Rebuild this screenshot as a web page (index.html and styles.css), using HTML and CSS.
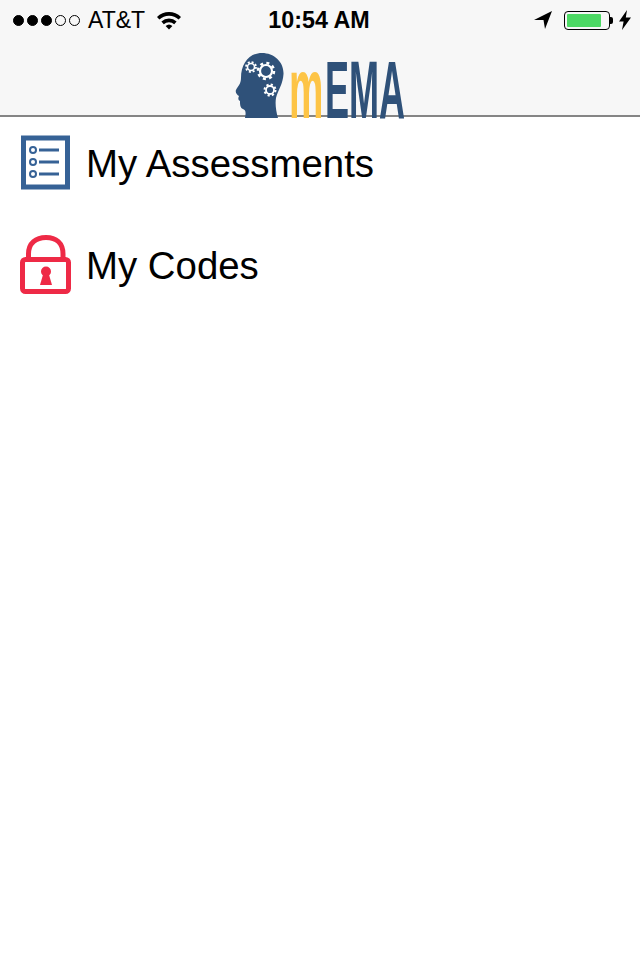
FILE: index.html
```html
<!DOCTYPE html>
<html lang="en">
<head>
    <meta charset="UTF-8">
    <meta name="viewport" content="width=device-width, initial-scale=1.0">
    <title>mEMA</title>
    <link rel="stylesheet" href="styles.css">
</head>
<body>
    <div class="top-bar">
        <div class="status-bar">
            <div class="status-left">
                <div class="signal">
                    <span class="dot on"></span>
                    <span class="dot on"></span>
                    <span class="dot on"></span>
                    <span class="dot"></span>
                    <span class="dot"></span>
                </div>
                <span class="carrier">AT&amp;T</span>
                <svg class="wifi" width="26" height="20" viewBox="0 0 26 20">
                    <path d="M1 7 A17 17 0 0 1 25 7 L22.6 9.6 A13.6 13.6 0 0 0 3.4 9.6 Z" fill="#000"/>
                    <path d="M5.4 11.6 A11 11 0 0 1 20.6 11.6 L18.2 14.2 A7.6 7.6 0 0 0 7.8 14.2 Z" fill="#000"/>
                    <path d="M9.6 16 A5 5 0 0 1 16.4 16 L13 19.6 Z" fill="#000"/>
                </svg>
            </div>
            <div class="clock">10:54 AM</div>
            <div class="status-right">
                <svg class="arrow" width="20" height="20" viewBox="0 0 20 20">
                    <path d="M1 10 L19 1 L12 19 L10.5 10 Z" fill="#000"/>
                </svg>
                <div class="battery">
                    <div class="battery-body">
                        <div class="battery-level"></div>
                    </div>
                    <div class="battery-nub"></div>
                </div>
                <svg class="bolt" width="12" height="20" viewBox="0 0 12 20">
                    <path d="M8 0 L0 11.5 L4.6 11.5 L3 20 L12 7.5 L6.8 7.5 Z" fill="#000"/>
                </svg>
            </div>
        </div>
        <div class="nav-bar">
            <svg class="logo" width="176" height="100" viewBox="232 40 176 100">
                <path d="M262 53 C274 53 284 62 283.500 74 C283 84 278 90 276 98 C275 104 276 111 278 118 L245 118 C246 113 246 110 243 109 C240 108 240 104 240 101 C238 100 238 98 239 96 C237 95 235 92 236 90 C238 86 241 84 241 78 C241 64 249 53 262 53 Z" fill="#2f5179"/>
                <circle cx="266" cy="71" r="6" fill="none" stroke="#fff" stroke-width="2.200"/>
                <circle cx="266" cy="71" r="8" fill="none" stroke="#fff" stroke-width="2.500" stroke-dasharray="3 3.300"/>
                <circle cx="251" cy="67" r="3.500" fill="none" stroke="#fff" stroke-width="1.600"/>
                <circle cx="251" cy="67" r="5" fill="none" stroke="#fff" stroke-width="1.800" stroke-dasharray="2 1.930"/>
                <circle cx="270" cy="90" r="4" fill="none" stroke="#fff" stroke-width="1.800"/>
                <circle cx="270" cy="90" r="5.500" fill="none" stroke="#fff" stroke-width="2" stroke-dasharray="2.200 2.120"/>
                <text class="logo-m" transform="translate(289 118) scale(0.45 1)">m</text>
                <text class="logo-ema" transform="translate(325 118) scale(0.445 1)">EMA</text>
            </svg>
        </div>
    </div>

    <div class="menu">
        <div class="menu-row">
            <svg class="menu-icon" width="52" height="64" viewBox="0 0 52 64">
                <rect x="3.500" y="6" width="44" height="49" fill="none" stroke="#366296" stroke-width="5"/>
                <circle cx="13" cy="18" r="3" fill="none" stroke="#366296" stroke-width="2"/>
                <circle cx="13" cy="30" r="3" fill="none" stroke="#366296" stroke-width="2"/>
                <circle cx="13" cy="42" r="3" fill="none" stroke="#366296" stroke-width="2"/>
                <path d="M19 18 H39 M19 30 H39 M19 42 H39" stroke="#366296" stroke-width="3"/>
            </svg>
            <span class="menu-label">My Assessments</span>
        </div>
        <div class="menu-row">
            <svg class="menu-icon" width="52" height="64" viewBox="0 0 52 64">
                <path d="M8.500 26 V20 C8.500 9 16 3.500 26 3.500 C36 3.500 43 9 43 20 V26" fill="none" stroke="#ee2a46" stroke-width="5"/>
                <rect x="2.500" y="25.500" width="46" height="32" rx="3" fill="none" stroke="#ee2a46" stroke-width="5"/>
                <circle cx="26" cy="37.500" r="5" fill="#ee2a46"/>
                <path d="M23.500 39 L28.500 39 L32 51 L20 51 Z" fill="#ee2a46"/>
            </svg>
            <span class="menu-label">My Codes</span>
        </div>
    </div>
</body>
</html>
```

FILE: styles.css
```css
body {
    font-family: 'Liberation Sans', Arial, sans-serif;
    background-color: white;
    color: black;
    margin: 0;
}

.top-bar {
    background-color: #f7f7f7;
    border-bottom: 2px solid #858585;
    height: 115px;
}

.status-bar {
    height: 40px;
    display: grid;
    grid-template-columns: 1fr auto 1fr;
    align-items: center;
    font-size: 23px;
    padding: 0 9px 0 13px;
}

.status-left {
    display: flex;
    align-items: center;
}

.signal {
    display: flex;
    gap: 3px;
}

.dot {
    width: 9px;
    height: 9px;
    border: 1px solid black;
    border-radius: 50%;
}

.dot.on {
    background-color: black;
}

.carrier {
    margin-left: 8px;
}

.wifi {
    margin-left: 11px;
}

.clock {
    font-weight: bold;
    font-size: 23.3px;
    margin-right: 6px;
}

.status-right {
    display: flex;
    align-items: center;
    justify-content: flex-end;
}

.battery {
    display: flex;
    align-items: center;
    margin-left: 11px;
}

.battery-body {
    width: 46px;
    height: 19px;
    border: 1px solid black;
    border-radius: 4px;
    padding: 2px;
    box-sizing: border-box;
}

.battery-level {
    width: 34px;
    height: 100%;
    background-color: #4cd964;
    border-radius: 1px;
}

.battery-nub {
    width: 3px;
    height: 7px;
    background-color: black;
    border-radius: 0 2px 2px 0;
}

.bolt {
    margin-left: 6px;
}

.nav-bar {
    height: 75px;
    display: flex;
    justify-content: center;
    align-items: flex-start;
}

.logo {
    display: block;
}

.logo-m {
    font-size: 86px;
    font-weight: bold;
    fill: #fdc446;
}

.logo-ema {
    font-size: 81px;
    font-weight: bold;
    fill: #2f5179;
}

.menu {
    display: flex;
    flex-direction: column;
    gap: 38px;
    padding: 15px 0 0 20px;
}

.menu-row {
    display: flex;
    align-items: center;
    height: 64px;
}

.menu-label {
    font-size: 38.4px;
    margin-left: 14px;
}
```
